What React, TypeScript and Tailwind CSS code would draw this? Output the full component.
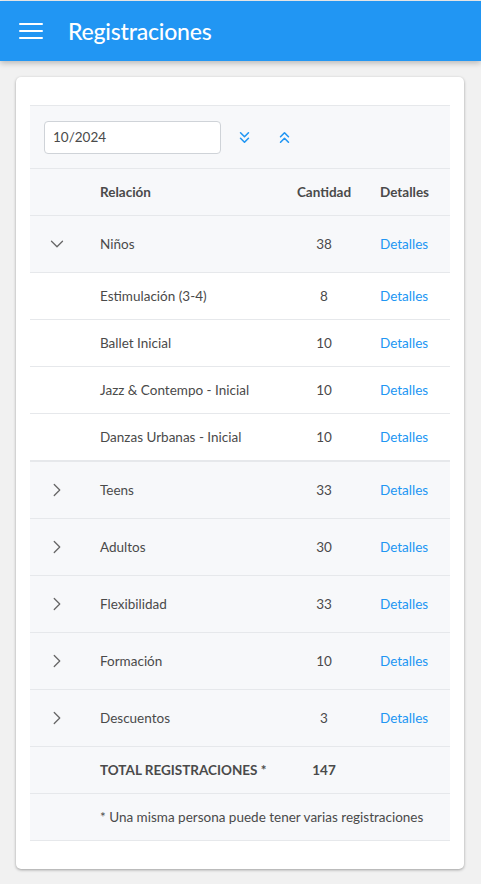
import { ChevronDown, ChevronRight, ChevronsDown, ChevronsUp } from "lucide-react";

type Row = { name: string; count: number; children?: { name: string; count: number }[] };

const rows: Row[] = [
    {
        name: "Niños",
        count: 38,
        children: [
            { name: "Estimulación (3-4)", count: 8 },
            { name: "Ballet Inicial", count: 10 },
            { name: "Jazz & Contempo - Inicial", count: 10 },
            { name: "Danzas Urbanas - Inicial", count: 10 },
        ],
    },
    { name: "Teens", count: 33 },
    { name: "Adultos", count: 30 },
    { name: "Flexibilidad", count: 33 },
    { name: "Formación", count: 10 },
    { name: "Descuentos", count: 3 },
];

const Header = () => {
    return (
        <div className="relative z-10 flex items-center h-[60px] bg-[#2196F3] shadow-[0_2px_6px_rgba(0,0,0,0.25)]">
            <div className="w-[68px] flex justify-center pr-[6px]">
                <div className="flex flex-col gap-[5px] w-[24px]">
                    <span className="block h-[2px] bg-white rounded"></span>
                    <span className="block h-[2px] bg-white rounded"></span>
                    <span className="block h-[2px] bg-white rounded"></span>
                </div>
            </div>
            <h1 className="text-white text-[23px] font-medium tracking-[-0.2px]">Registraciones</h1>
        </div>
    );
};

const GroupRow = ({ row, open }: { row: Row; open: boolean }) => {
    return (
        <div className="flex items-center h-[57px] bg-[#f7f8fa] border-b border-[#e6e8eb]">
            <div className="w-[70px] pl-[16px] text-[#666]">
                {open ? <ChevronDown size={22} strokeWidth={1.4} /> : <ChevronRight size={22} strokeWidth={1.4} />}
            </div>
            <div className="flex-1">{row.name}</div>
            <div className="w-[76px] text-center">{row.count}</div>
            <div className="w-[88px] pl-[18px] text-[#2196F3]">Detalles</div>
        </div>
    );
};

const ChildRow = ({ name, count }: { name: string; count: number }) => {
    return (
        <div className="flex items-center h-[47px] bg-white border-b border-[#e6e8eb]">
            <div className="w-[70px]"></div>
            <div className="flex-1">{name}</div>
            <div className="w-[76px] text-center">{count}</div>
            <div className="w-[88px] pl-[18px] text-[#2196F3]">Detalles</div>
        </div>
    );
};

export default function App() {
    return (
        <div className="min-h-[884px] bg-[#f1f1f1] pt-px font-['Lato',sans-serif] text-[13.5px] text-[#4a4a4a]">
            <Header />
            <div className="pl-[16px] pr-[17px] pt-[16px] pb-[15px]">
                <div className="bg-white rounded-[5px] shadow-[0_1px_3px_rgba(0,0,0,0.35)] px-[14px] pt-[28px] pb-[28px]">
                    <div className="border-t border-[#e6e8eb]">
                        <div className="flex items-center h-[63px] bg-[#f7f8fa] border-b border-[#e6e8eb] pl-[14px]">
                            <div className="w-[177px] h-[33px] rounded-[4px] border border-[#cfd3d8] bg-white flex items-center px-[8px]">
                                10/2024
                            </div>
                            <button className="ml-[14px] text-[#2196F3]">
                                <ChevronsDown size={19} strokeWidth={2} />
                            </button>
                            <button className="ml-[21px] text-[#2196F3]">
                                <ChevronsUp size={19} strokeWidth={2} />
                            </button>
                        </div>
                        <div className="flex items-center h-[47px] bg-[#f7f8fa] border-b border-[#e6e8eb] font-bold">
                            <div className="w-[70px]"></div>
                            <div className="flex-1">Relación</div>
                            <div className="w-[76px] text-center">Cantidad</div>
                            <div className="w-[88px] pl-[18px]">Detalles</div>
                        </div>
                        {rows.map((row) => (
                            <div key={row.name} className={row.children ? "border-b border-[#e6e8eb]" : ""}>
                                <GroupRow row={row} open={!!row.children} />
                                {row.children?.map((c) => (
                                    <ChildRow key={c.name} name={c.name} count={c.count} />
                                ))}
                            </div>
                        ))}
                        <div className="flex items-center h-[47px] bg-[#f7f8fa] border-b border-[#e6e8eb] font-bold">
                            <div className="w-[70px]"></div>
                            <div className="flex-1">TOTAL REGISTRACIONES *</div>
                            <div className="w-[76px] text-center">147</div>
                            <div className="w-[88px]"></div>
                        </div>
                        <div className="flex items-center h-[47px] bg-[#f7f8fa] border-b border-[#e6e8eb]">
                            <div className="w-[70px]"></div>
                            <div className="flex-1">* Una misma persona puede tener varias registraciones</div>
                        </div>
                    </div>
                </div>
            </div>
        </div>
    );
}
